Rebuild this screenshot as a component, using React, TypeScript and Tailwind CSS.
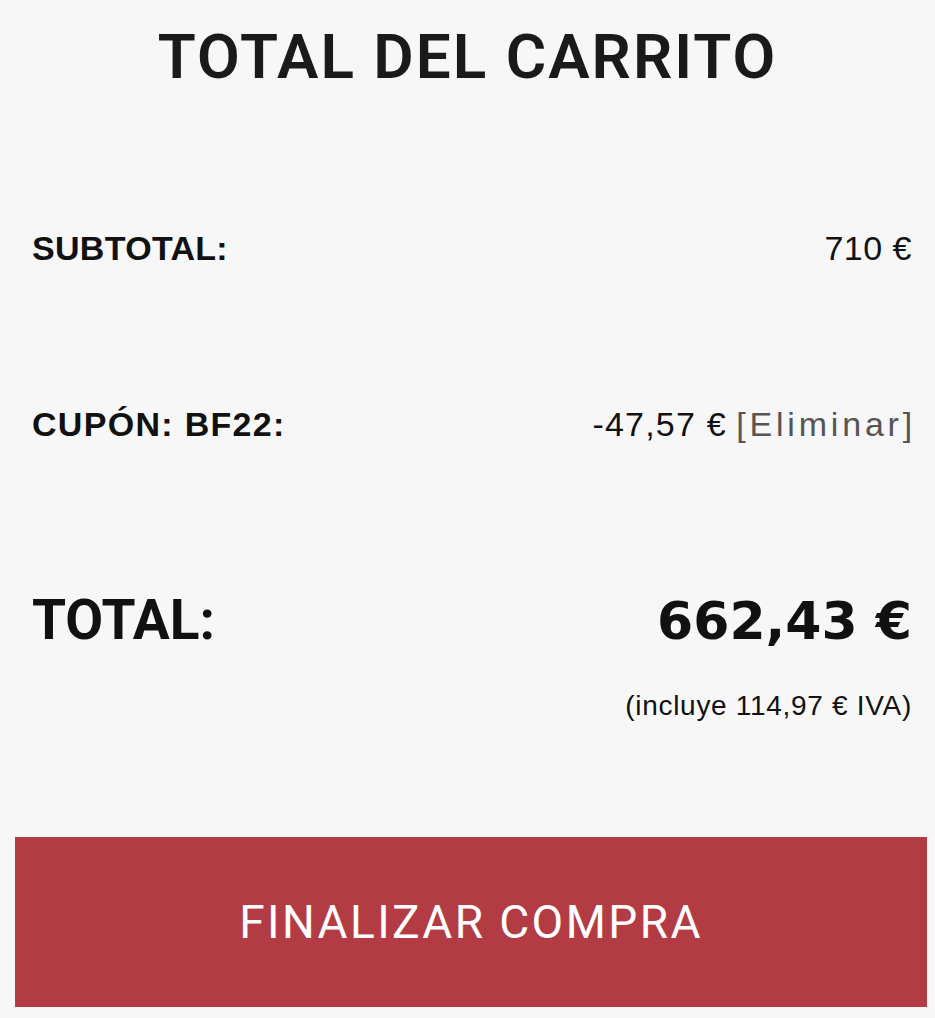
import React from "react";

export default function App() {
  return (
    <div
      className="w-[935px] h-[1018px] bg-[#f7f7f7] text-[#111] overflow-hidden flex flex-col whitespace-nowrap"
      style={{ fontFamily: "'Liberation Sans', Arial, sans-serif" }}
    >
      <h1
        className="text-center font-semibold text-[62px] leading-none tracking-[2px] text-[#1a1a1a] pt-[26px]"
        style={{ fontFamily: "Roboto, 'Liberation Sans', sans-serif" }}
      >
        TOTAL DEL CARRITO
      </h1>

      <div className="flex justify-between items-center pr-[23px] pl-[32px] mt-[135px]">
        <span className="font-bold text-[34px] tracking-[0.3px]">SUBTOTAL:</span>
        <span className="text-[34px] tracking-[0.5px]">710 €</span>
      </div>

      <div className="flex justify-between items-center pr-[23px] pl-[32px] mt-[125px]">
        <span className="font-bold text-[34px] tracking-[1.3px]">CUPÓN: BF22:</span>
        <span className="text-[34px]">
          <span className="tracking-[1.2px]">-47,57 €</span>{" "}
          <span className="text-[#555] tracking-[3.8px] mr-[-4px]">[Eliminar]</span>
        </span>
      </div>

      <div className="flex justify-between items-center pr-[23px] pl-[32px] mt-[143px]">
        <span
          className="font-bold text-[55px] leading-none"
          style={{ fontFamily: "Roboto, 'Liberation Sans', sans-serif" }}
        >
          TOTAL:
        </span>
        <span
          className="font-bold text-[52px] leading-none"
          style={{ fontFamily: "'DejaVu Sans', 'Liberation Sans', sans-serif" }}
        >
          662,43 €
        </span>
      </div>
      <div className="text-right pr-[23px] mt-[37px] text-[28px] tracking-[0.7px]">(incluye 114,97 € IVA)</div>

      <div className="pl-[15px] pr-[8px] mt-[110px]">
        <button
          className="w-full h-[170px] bg-[#b33c44] text-white text-[46px] tracking-[2.4px] font-normal flex items-center justify-center"
          style={{ fontFamily: "Roboto, 'Liberation Sans', sans-serif" }}
        >
          FINALIZAR COMPRA
        </button>
      </div>
    </div>
  );
}
